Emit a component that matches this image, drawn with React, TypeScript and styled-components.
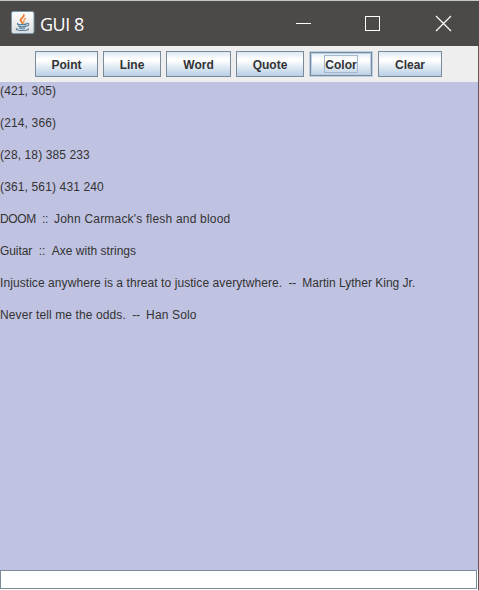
import React from 'react';
import styled, { createGlobalStyle, css } from 'styled-components';

const GlobalStyle = createGlobalStyle`
  *, *::before, *::after { box-sizing: border-box; }
  body { margin: 0; overflow: hidden; }
`;

const Window = styled.div`
  display: flex;
  flex-direction: column;
  width: 479px;
  height: 590px;
  overflow: hidden;
  background: #eeeeee;
  font-family: "Liberation Sans", Arial, sans-serif;
  color: #333333;
`;

const TitleBar = styled.header`
  display: flex;
  align-items: center;
  flex: 0 0 46px;
  padding: 0 27px 0 11px;
  border-top: 1px solid #c3c8c3;
  background: #4c4a48;
  color: #ffffff;
`;

const JavaIcon = styled.svg`
  flex: none;
  width: 24px;
  height: 24px;
  margin-bottom: 2px;
`;

const Title = styled.h1`
  flex: 1;
  margin: 0 0 0 5px;
  font: 400 18px/24px "Open Sans", "Noto Sans", sans-serif;
  letter-spacing: -0.5px;
`;

const WindowControls = styled.div`
  display: grid;
  grid-template-columns: 69px 71px 17px;
  align-items: center;
`;

const ControlIcon = styled.svg`
  display: block;
  width: 17px;
  height: 17px;
  fill: none;
  stroke: #ffffff;
`;

const Client = styled.main`
  display: flex;
  flex-direction: column;
  flex: 1;
  border-right: 1px solid #5c5b5a;
`;

const Toolbar = styled.nav`
  display: flex;
  justify-content: center;
  gap: 5px;
  flex: 0 0 36px;
  padding: 5px 1px 5px 0;
`;

const ToolButton = styled.button<{ $width: number; $focused?: boolean }>`
  flex: none;
  width: ${({ $width }) => $width}px;
  height: 26px;
  padding: 0;
  border: 1px solid #7a8a99;
  background: linear-gradient(#dde8f3 0%, #ffffff 30%, #ffffff 34%, #b8cfe5 100%);
  color: #333333;
  font: 700 12px/14px "Liberation Sans", Arial, sans-serif;
  ${({ $focused }) =>
    $focused &&
    css`
      border-color: #b8cfe5;
      box-shadow: inset 0 0 0 1px #7a8a99, inset 0 0 0 2px #b8cfe5;
    `}
`;

const ButtonLabel = styled.span<{ $focused?: boolean }>`
  display: block;
  width: fit-content;
  height: 18px;
  margin: 0 auto;
  padding: 3px 1px 0;
  outline: ${({ $focused }) => ($focused ? '1px solid #a3b8cc' : 'none')};
  outline-offset: -1px;
`;

const Output = styled.section`
  flex: 1;
  background: #c0c2e1;
  padding-top: 1px;
`;

const OutputLine = styled.p`
  margin: 0 0 16px;
  font-size: 12px;
  line-height: 16px;
  white-space: pre;
`;

const Run = styled.span<{ $spacing: number }>`
  letter-spacing: ${({ $spacing }) => $spacing}px;
`;

const FieldRow = styled.div`
  display: flex;
  flex: 0 0 20px;
  padding: 0 1px 1px 0;
  background: #ffffff;
`;

const Field = styled.input`
  flex: 1;
  min-width: 0;
  margin: 0;
  padding: 0 2px;
  border: 1px solid #7a8a99;
  border-radius: 0;
  background: #ffffff;
  outline: none;
  font: 12px "Liberation Sans", Arial, sans-serif;
`;

const buttons = [
  { label: 'Point', width: 63 },
  { label: 'Line', width: 58 },
  { label: 'Word', width: 65 },
  { label: 'Quote', width: 68 },
  { label: 'Color', width: 64, focused: true },
  { label: 'Clear', width: 64 },
];

type TextRun = { text: string; spacing: number };

const lines: TextRun[][] = [
  [{ text: '(421, 305)', spacing: 0.15 }],
  [{ text: '(214, 366)', spacing: 0.15 }],
  [{ text: '(28, 18) 385 233', spacing: 0.11 }],
  [{ text: '(361, 561) 431 240', spacing: 0.14 }],
  [
    { text: 'DOOM  ::  ', spacing: -0.33 },
    { text: "John Carmack's flesh and blood", spacing: 0.2 },
  ],
  [
    { text: 'Guitar  ::  ', spacing: -0.08 },
    { text: 'Axe with strings', spacing: 0.02 },
  ],
  [
    { text: 'Injustice anywhere is a threat to justice averytwhere.', spacing: 0.075 },
    { text: '  --  ', spacing: -0.2 },
    { text: 'Martin Lyther King Jr.', spacing: 0 },
  ],
  [
    { text: 'Never tell me the odds.', spacing: 0.11 },
    { text: '  --  ', spacing: -0.2 },
    { text: 'Han Solo', spacing: 0.15 },
  ],
];

export default function App() {
  return (
    <Window>
      <GlobalStyle />
      <TitleBar>
        <JavaIcon viewBox="0 0 24 24" aria-hidden="true">
          <defs>
            <linearGradient id="tile" x1="0" y1="0" x2="0" y2="1">
              <stop offset="0" stopColor="#ffffff" />
              <stop offset="1" stopColor="#dedede" />
            </linearGradient>
          </defs>
          <rect x="0.5" y="0.5" width="22.5" height="22" rx="1.8" fill="url(#tile)" stroke="#7897a9" />
          <g fill="none" strokeLinecap="round">
            <path d="M12.8 4C13.8 6 9 7.2 9.5 9.2C9.7 10.3 11.2 11 11.3 12.2" stroke="#ec7b2d" strokeWidth="1.8" />
            <path d="M14.7 7.4C11.5 8.8 13.8 9.8 12.5 11.8" stroke="#f0924e" strokeWidth="1.3" />
            <g stroke="#54809f">
              <path d="M6.7 12.5C5 13.8 13 14 15.6 12.8" strokeWidth="1.3" />
              <path d="M7.8 14.9C8 16.4 13.4 16.3 14.7 15.1" strokeWidth="1.5" />
              <path d="M16 12.2C18.8 12 18 14.7 15.8 15.3" strokeWidth="1.1" />
              <path d="M6.2 17.5C3 18.6 8.2 19.6 12 19.5C15.8 19.4 18.4 18.6 17 17.8" strokeWidth="1.1" />
              <path d="M8.5 17.5C10 18.1 12.8 18 14 17.5" strokeWidth="1" />
            </g>
          </g>
        </JavaIcon>
        <Title>GUI 8</Title>
        <WindowControls>
          <ControlIcon viewBox="0 0 17 17"><path d="M1 8.5H16" /></ControlIcon>
          <ControlIcon viewBox="0 0 17 17"><rect x="1.5" y="1.5" width="14" height="14" /></ControlIcon>
          <ControlIcon viewBox="0 0 17 17"><path d="M1 1L16 16M16 1L1 16" strokeWidth="1.2" /></ControlIcon>
        </WindowControls>
      </TitleBar>
      <Client>
        <Toolbar>
          {buttons.map(({ label, width, focused }) => (
            <ToolButton key={label} type="button" $width={width} $focused={focused}>
              <ButtonLabel $focused={focused}>{label}</ButtonLabel>
            </ToolButton>
          ))}
        </Toolbar>
        <Output>
          {lines.map((runs) => (
            <OutputLine key={runs[0].text}>
              {runs.map(({ text, spacing }) => (
                <Run key={text} $spacing={spacing}>{text}</Run>
              ))}
            </OutputLine>
          ))}
        </Output>
        <FieldRow>
          <Field type="text" aria-label="Input" />
        </FieldRow>
      </Client>
    </Window>
  );
}
